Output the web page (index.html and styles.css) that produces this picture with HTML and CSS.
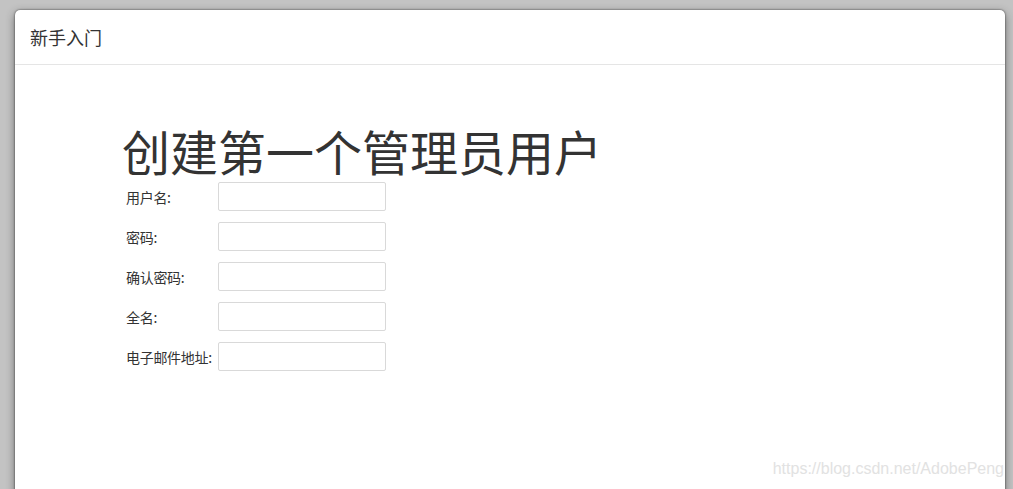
FILE: index.html
```html
<!DOCTYPE html>
<html lang="zh-CN">
<head>
    <meta charset="UTF-8">
    <meta name="viewport" content="width=device-width, initial-scale=1.0">
    <title>新手入门</title>
    <link rel="stylesheet" href="styles.css">
</head>
<body>

    <div class="modal">
        <div class="modal-header">
            <h4 class="modal-title">新手入门</h4>
        </div>
        <div class="modal-body">
            <h1 class="page-title">创建第一个管理员用户</h1>
            <form class="user-form">
                <label for="username">用户名:</label>
                <input type="text" id="username">

                <label for="password">密码:</label>
                <input type="password" id="password">

                <label for="password2">确认密码:</label>
                <input type="password" id="password2">

                <label for="fullname">全名:</label>
                <input type="text" id="fullname">

                <label for="email">电子邮件地址:</label>
                <input type="text" id="email">
            </form>
        </div>
        <div class="watermark">https://blog.csdn.net/AdobePeng</div>
    </div>

</body>
</html>
```

FILE: styles.css
```css
body {
    margin: 0;
    height: 100vh;
    overflow: hidden;
    background-color: #c3c3c3;
    font-family: "Noto Sans CJK SC", "Liberation Sans", sans-serif;
    color: #333;
}

/* Dialog */
.modal {
    position: relative;
    margin: 10px 8px 0 15px;
    height: 100%;
    background: #fff;
    border-radius: 5px 5px 0 0;
    box-shadow: 0 0 2px rgba(0, 0, 0, 0.7), 0 3px 10px rgba(0, 0, 0, 0.45);
}

.modal-header {
    height: 55px;
    box-sizing: border-box;
    padding: 0 15px;
    display: flex;
    align-items: center;
    border-bottom: 1px solid #e5e5e5;
}

.modal-title {
    margin: 0;
    font-size: 18px;
    font-weight: normal;
    line-height: 1;
}

.modal-body {
    padding: 57px 0 0 107px;
}

.page-title {
    margin: 0;
    font-size: 48px;
    font-weight: normal;
    line-height: 56px;
}

/* Form */
.user-form {
    margin: 4px 0 0 4px;
    display: grid;
    grid-template-columns: 92px 168px;
    row-gap: 11px;
    align-items: center;
}

.user-form label {
    font-size: 14px;
    letter-spacing: -0.3px;
    white-space: nowrap;
}

.user-form input {
    box-sizing: border-box;
    width: 168px;
    height: 29px;
    margin: 0;
    border: 1px solid #d9d9d9;
    border-radius: 2px;
    padding: 4px 6px;
    font-size: 13px;
}

.watermark {
    position: absolute;
    right: 1px;
    top: 450px;
    font-family: "Liberation Sans", Arial, sans-serif;
    font-size: 16px;
    color: #e2e2e2;
}
```
